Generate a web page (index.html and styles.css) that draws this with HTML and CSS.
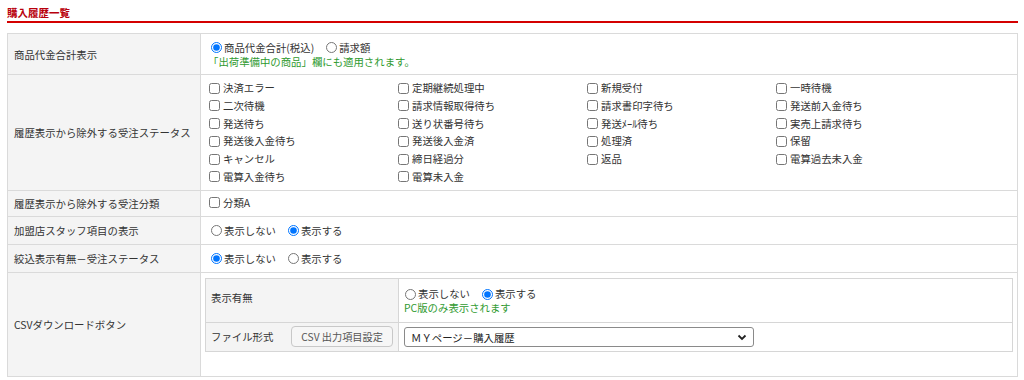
FILE: index.html
```html
<!DOCTYPE html>
<html lang="ja">
<head>
    <meta charset="UTF-8">
    <title>購入履歴一覧</title>
    <link rel="stylesheet" href="styles.css">
</head>
<body>
  <div class="page">
    <h1 class="title">購入履歴一覧</h1>

    <table class="setting">
      <tr class="r1">
        <th>商品代金合計表示</th>
        <td>
          <div class="opts">
            <label><input type="radio" name="total" checked>商品代金合計(税込)</label>
            <label><input type="radio" name="total">請求額</label>
          </div>
          <p class="note">「出荷準備中の商品」欄にも適用されます。</p>
        </td>
      </tr>
      <tr class="r2">
        <th>履歴表示から除外する受注ステータス</th>
        <td>
          <div class="checks">
            <label><input type="checkbox">決済エラー</label>
            <label><input type="checkbox">定期継続処理中</label>
            <label><input type="checkbox">新規受付</label>
            <label><input type="checkbox">一時待機</label>
            <label><input type="checkbox">二次待機</label>
            <label><input type="checkbox">請求情報取得待ち</label>
            <label><input type="checkbox">請求書印字待ち</label>
            <label><input type="checkbox">発送前入金待ち</label>
            <label><input type="checkbox">発送待ち</label>
            <label><input type="checkbox">送り状番号待ち</label>
            <label><input type="checkbox">発送ﾒｰﾙ待ち</label>
            <label><input type="checkbox">実売上請求待ち</label>
            <label><input type="checkbox">発送後入金待ち</label>
            <label><input type="checkbox">発送後入金済</label>
            <label><input type="checkbox">処理済</label>
            <label><input type="checkbox">保留</label>
            <label><input type="checkbox">キャンセル</label>
            <label><input type="checkbox">締日経過分</label>
            <label><input type="checkbox">返品</label>
            <label><input type="checkbox">電算過去未入金</label>
            <label><input type="checkbox">電算入金待ち</label>
            <label><input type="checkbox">電算未入金</label>
          </div>
        </td>
      </tr>
      <tr class="r3">
        <th>履歴表示から除外する受注分類</th>
        <td><label class="one"><input type="checkbox">分類A</label></td>
      </tr>
      <tr class="r4">
        <th>加盟店スタッフ項目の表示</th>
        <td>
          <div class="opts">
            <label><input type="radio" name="staff">表示しない</label>
            <label><input type="radio" name="staff" checked>表示する</label>
          </div>
        </td>
      </tr>
      <tr class="r4">
        <th>絞込表示有無－受注ステータス</th>
        <td>
          <div class="opts">
            <label><input type="radio" name="filter" checked>表示しない</label>
            <label><input type="radio" name="filter">表示する</label>
          </div>
        </td>
      </tr>
      <tr class="r6">
        <th>CSVダウンロードボタン</th>
        <td class="nest-cell">
          <table class="inner">
            <tr class="i1">
              <th><span class="lift">表示有無</span></th>
              <td>
                <div class="opts">
                  <label><input type="radio" name="csv">表示しない</label>
                  <label><input type="radio" name="csv" checked>表示する</label>
                </div>
                <p class="note">PC版のみ表示されます</p>
              </td>
            </tr>
            <tr class="i2">
              <th>
                <div class="fmt">
                  <span>ファイル形式</span>
                  <button type="button" class="btn">CSV 出力項目設定</button>
                </div>
              </th>
              <td>
                <div class="select">
                  <span>ＭＹページ－購入履歴</span>
                  <svg width="10" height="7" viewBox="0 0 10 7"><path d="M1.5 1.5 L5 5 L8.5 1.5" fill="none" stroke="#222" stroke-width="1.8"/></svg>
                </div>
              </td>
            </tr>
          </table>
        </td>
      </tr>
    </table>
  </div>
</body>
</html>
```

FILE: styles.css
```css
body {
  margin: 0;
  background-color: #fff;
  color: #333;
  font-family: "Noto Sans CJK JP", "Noto Sans", sans-serif;
  font-size: 10.4px;
}

.page {
  padding: 0 6px 0 7px;
}

.title {
  margin: 0;
  padding-top: 5px;
  height: 16px;
  line-height: 16px;
  font-size: 10.5px;
  font-weight: bold;
  color: #b8000c;
  border-bottom: 2px solid #d40000;
}

.setting {
  margin-top: 10px;
  width: 100%;
  border-collapse: collapse;
}

.setting > tbody > tr > th,
.setting > tbody > tr > td {
  border: 1px solid #dadada;
}

.setting th {
  width: 186px;
  padding: 0 0 0 6px;
  text-align: left;
  font-weight: normal;
  background-color: #f4f4f4;
}

.setting td {
  padding: 0 0 0 7px;
  vertical-align: middle;
}

.r1 { height: 41px; }
.r2 { height: 116px; }
.r3 { height: 26px; }
.r4 { height: 28px; }
.r6 { height: 104px; }

label {
  display: inline-flex;
  align-items: center;
  line-height: 14px;
}

input[type="radio"] {
  width: 11px;
  height: 11px;
  margin: 0 2px 0 3px;
}

input[type="checkbox"] {
  width: 11px;
  height: 11px;
  margin: 0 3px 0 1px;
}

.opts {
  display: flex;
  gap: 9px;
}

.note {
  margin: 0;
  line-height: 13px;
  color: #2f9a2f;
}

.checks {
  display: grid;
  grid-template-columns: repeat(4, 189px);
  row-gap: 3.8px;
  padding: 2px 0;
}

.nest-cell {
  vertical-align: top !important;
  padding: 5px 4px 0 4px !important;
}

.inner {
  width: 100%;
  border-collapse: collapse;
}

.inner th,
.inner td {
  border: 1px solid #d6d6d6;
}

.inner th {
  width: 187px;
  padding-left: 5px;
}

.inner td {
  padding-left: 5px;
}

.i1 { height: 44px; }
.i2 { height: 29px; }

.lift {
  position: relative;
  top: -3px;
}

.i1 .opts label:first-child input {
  margin-left: 1px;
}

.fmt {
  display: flex;
  align-items: center;
  gap: 18px;
  margin-top: -2px;
}

.btn {
  height: 21px;
  padding: 0 9px;
  font-family: inherit;
  font-size: 10.2px;
  color: #555;
  background-color: #f6f6f6;
  border: 1px solid #c8c8c8;
  border-radius: 4px;
}

.select {
  display: flex;
  align-items: center;
  justify-content: space-between;
  box-sizing: border-box;
  width: 350px;
  height: 20px;
  padding: 0 6px 0 6px;
  border: 1px solid #8a8a8a;
  border-radius: 3px;
  color: #222;
}
```
